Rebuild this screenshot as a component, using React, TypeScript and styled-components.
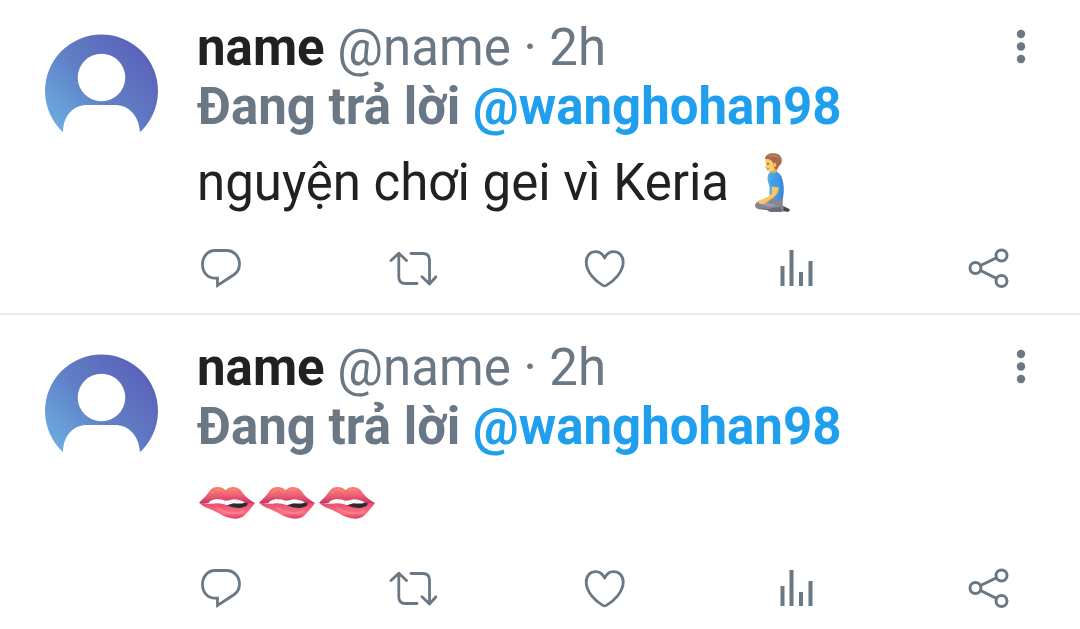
import React, { useId } from "react";
import styled, { createGlobalStyle } from "styled-components";

const GlobalStyle = createGlobalStyle`
  * { box-sizing: border-box; }
  body {
    margin: 0;
    background: #fff;
    color: #212121;
    font-family: Roboto, "Liberation Sans", sans-serif;
  }
`;

const slate = "#697884";

const Feed = styled.main`
  width: 100%;
  overflow: hidden;
`;

const TweetCard = styled.article`
  display: flex;
  align-items: flex-start;
  gap: 39px;
  padding: 23px 44px 20px;
  border-bottom: 2px solid #e9eaeb;

  &:first-child { padding-top: 18px; }
  &:last-child { border-bottom: 0; padding-bottom: 16px; }
`;

const AvatarLink = styled.a`
  display: block;
  flex: none;
  margin-top: 16px;

  svg { display: block; }
`;

const Content = styled.div`
  flex: 1;
  min-width: 0;
`;

const Header = styled.header`
  display: flex;
  justify-content: space-between;
  align-items: flex-start;
`;

const Byline = styled.div`
  font-size: 51px;
  line-height: 59px;
  color: ${slate};
  white-space: nowrap;
`;

const DisplayName = styled.strong`
  font-weight: 700;
  color: #212121;
`;

const ReplyLine = styled.div`
  font-size: 51px;
  line-height: 59px;
  font-weight: 700;
  color: ${slate};
`;

const Mention = styled.a`
  color: #1f9fee;
  text-decoration: none;
`;

const Body = styled.p`
  margin: 17px 0 32px;
  font-size: 51px;
  line-height: 60px;
`;

const EmojiArt = styled.svg`
  width: 60px;
  height: 60px;
  vertical-align: top;
`;

const Actions = styled.div`
  display: flex;
  justify-content: space-between;
  margin-right: 23px;
`;

const IconButton = styled.button`
  display: block;
  padding: 0;
  border: 0;
  background: none;
  color: ${slate};
  cursor: pointer;

  svg { display: block; }
`;

const MenuButton = styled(IconButton)`
  margin-top: 10px;
  margin-right: 8px;
`;

function Avatar() {
  const id = useId();
  return (
    <svg width="114" height="114" viewBox="0 0 114 114" role="img" aria-label="name">
      <defs>
        <linearGradient id={id} x1="0" y1="0.8" x2="0.8" y2="0.15">
          <stop offset="0" stopColor="#6baadf" />
          <stop offset="0.5" stopColor="#607fc6" />
          <stop offset="1" stopColor="#5c64ba" />
        </linearGradient>
      </defs>
      <path
        d="M19 98.3A56.5 56.5 0 1 1 96 98.3C95 81 84 71 71 71H43C30 71 19 81 19 98.3Z"
        fill={`url(#${id})`}
      />
      <circle cx="57.5" cy="43.5" r="23.8" fill="#fff" />
    </svg>
  );
}

function KneelingMan() {
  const id = useId();
  return (
    <EmojiArt viewBox="9 24 180 180" role="img" aria-label="kneeling man">
      <defs>
        <linearGradient id={id} x1="0" y1="0" x2="1" y2="0">
          <stop offset="0" stopColor="#55b1f1" />
          <stop offset="1" stopColor="#3585d8" />
        </linearGradient>
      </defs>
      <path d="M121 178L151 192Q155 201 144 200L124 197Z" fill="#49474d" />
      <path d="M84 163Q65 163 53 172Q44 181 51 189Q57 194 85 195Q91 202 104 201H130Q138 193 131 180L132 158L99 157Z" fill="#85868f" />
      <path d="M54 174Q75 168 97 177L119 181L88 185Q76 181 54 174Z" fill="#9b9ca5" />
      <path d="M58 189L87 192L122 186L129 195L125 200H96Q88 200 84 195Z" fill="#6a6b75" />
      <path d="M92 75L114 70L115 88Q104 94 92 86Z" fill="#e7ad55" />
      <path d="M82 38Q76 49 81 59L78 68L82 70Q81 78 88 79Q103 81 112 67L113 48L95 34Z" fill="#fbcb70" />
      <path d="M78 42Q79 28 97 25Q120 23 127 38Q132 53 120 64L115 73Q107 75 104 65L102 53Q99 45 88 42Z" fill="#a86a4a" />
      <path d="M82 37Q90 26 106 29Q119 30 122 42Q112 34 101 35Q90 33 82 37Z" fill="#c0805e" />
      <ellipse cx="107" cy="60" rx="5" ry="7" fill="#f2b660" />
      <circle cx="87" cy="56" r="2.5" fill="#50382e" />
      <path d="M83 70L91 71" stroke="#b87247" strokeWidth="2" />
      <path d="M93 81Q82 92 87 110L92 127L91 159Q111 169 132 159Q138 127 129 99Q124 85 113 81Q102 87 93 81Z" fill={`url(#${id})`} />
      <path d="M99 122L120 125Q119 145 104 157L82 173Q70 180 60 174L57 169Q59 163 69 164Q83 159 98 146Z" fill="#f8c567" />
      <path d="M120 125Q119 145 104 157L82 173" fill="none" stroke="#dba24b" strokeWidth="2" />
      <path d="M97 107Q103 96 115 101Q125 107 122 128L97 124Z" fill="#3f9be9" />
    </EmojiArt>
  );
}

function BitingLip() {
  const id = useId();
  return (
    <EmojiArt viewBox="21 -6 180 180" role="img" aria-label="biting lip">
      <defs>
        <linearGradient id={`${id}u`} x1="0" y1="0" x2="0" y2="1">
          <stop offset="0" stopColor="#f98272" />
          <stop offset="0.5" stopColor="#ed6074" />
          <stop offset="1" stopColor="#c72c62" />
        </linearGradient>
        <linearGradient id={`${id}l`} x1="0" y1="0" x2="0" y2="1">
          <stop offset="0" stopColor="#e74a70" />
          <stop offset="0.65" stopColor="#fb7280" />
          <stop offset="1" stopColor="#d93d69" />
        </linearGradient>
      </defs>
      <path d="M49 82L70 72H153L175 84L169 100H128L82 89Z" fill="#2e2929" />
      <path d="M55 82Q62 72 80 71L143 71Q159 73 165 83Q151 87 131 85L111 91L62 87Z" fill="#fff" />
      <path d="M85 73V84M103 76V89M123 77V85M142 74V83" stroke="#dcd5d9" strokeWidth="2" />
      <path d="M27 83Q45 68 59 48Q67 35 85 36Q97 36 106 46Q117 35 130 36Q148 37 158 53Q170 70 195 84Q181 90 167 84Q150 73 131 73Q117 77 108 77Q94 72 79 72Q61 75 53 84Q38 89 27 83Z" fill={`url(#${id}u)`} />
      <path d="M27 83Q45 87 65 86Q92 82 111 91Q134 101 154 98Q170 96 177 84L195 84Q184 99 170 115Q157 131 137 131Q112 131 86 115Q69 105 49 98Q36 92 27 83Z" fill={`url(#${id}l)`} />
      <path d="M64 56Q74 42 88 43Q98 45 104 54M116 49Q127 40 138 45" fill="none" stroke="#fb9a86" strokeWidth="3" strokeLinecap="round" opacity=".65" />
      <path d="M83 101Q111 115 135 115Q151 114 160 107" fill="none" stroke="#ff8990" strokeWidth="6" strokeLinecap="round" opacity=".65" />
    </EmojiArt>
  );
}

const strokeProps = {
  fill: "none",
  stroke: "currentColor",
  strokeWidth: 2.8,
  strokeLinecap: "round" as const,
  strokeLinejoin: "round" as const,
};

const actions = [
  {
    label: "Reply",
    art: <path {...strokeProps} strokeLinejoin="miter" d="M20.5 33.2H18C10.8 33.2 5.5 27.5 5.5 19.5S10.8 5.5 18 5.5H29.5C37 5.5 42.5 11.5 42.5 19C42.5 24 40.3 27.5 36.5 30L20.5 40.5Z" />,
  },
  {
    label: "Retweet",
    art: <path {...strokeProps} d="M2 15.5L9.8 8.3L17.5 15.5M9.8 8.5V32Q9.8 38.5 16.5 38.5H28M22 8.5H33.5Q40.5 8.5 40.5 15V38.5M33 31.8L40.5 39L47 31.8" />,
  },
  {
    label: "Like",
    art: <path {...strokeProps} d="M23.6 13C21.6 8.8 18.6 6.6 14.8 6.6C9.2 6.6 5.2 10.8 5.2 17C5.2 27 14.5 36.3 21.8 40.4Q23.6 41.4 25.4 40.4C32.7 36.3 42.2 27 42.2 17C42.2 10.8 38.2 6.6 32.4 6.6C28.8 6.6 25.6 8.8 23.6 13Z" />,
  },
  {
    label: "View activity",
    art: <path fill="currentColor" d="M7.5 21h4v20h-4zM16.5 5h4v36h-4zM26 27h4v14h-4zM35.5 16h4v25h-4z" />,
  },
  {
    label: "Share",
    art: (
      <g {...strokeProps} strokeWidth="3">
        <circle cx="10.5" cy="23" r="5.5" />
        <circle cx="36.5" cy="10.5" r="5.5" />
        <circle cx="36.5" cy="36" r="5.5" />
        <path d="M15.5 20.5L31.4 12.8M15.5 25.5L31.4 33.4" />
      </g>
    ),
  },
];

function Tweet({ children }: { children: React.ReactNode }) {
  return (
    <TweetCard>
      <AvatarLink href="#name"><Avatar /></AvatarLink>
      <Content>
        <Header>
          <Byline><DisplayName>name</DisplayName> @name · 2h</Byline>
          <MenuButton type="button" aria-label="More options">
            <svg width="14" height="38" viewBox="0 0 14 38" fill="currentColor">
              <circle cx="7" cy="6" r="4.2" />
              <circle cx="7" cy="18.5" r="4.2" />
              <circle cx="7" cy="31" r="4.2" />
            </svg>
          </MenuButton>
        </Header>
        <ReplyLine>Đang trả lời <Mention href="#wanghohan98">@wanghohan98</Mention></ReplyLine>
        <Body>{children}</Body>
        <Actions>
          {actions.map(({ label, art }) => (
            <IconButton key={label} type="button" aria-label={label}>
              <svg width="48" height="48" viewBox="0 0 48 48">{art}</svg>
            </IconButton>
          ))}
        </Actions>
      </Content>
    </TweetCard>
  );
}

export default function App() {
  return (
    <>
      <GlobalStyle />
      <Feed>
        <Tweet>nguyện chơi gei vì Keria <KneelingMan /></Tweet>
        <Tweet><BitingLip /><BitingLip /><BitingLip /></Tweet>
      </Feed>
    </>
  );
}
